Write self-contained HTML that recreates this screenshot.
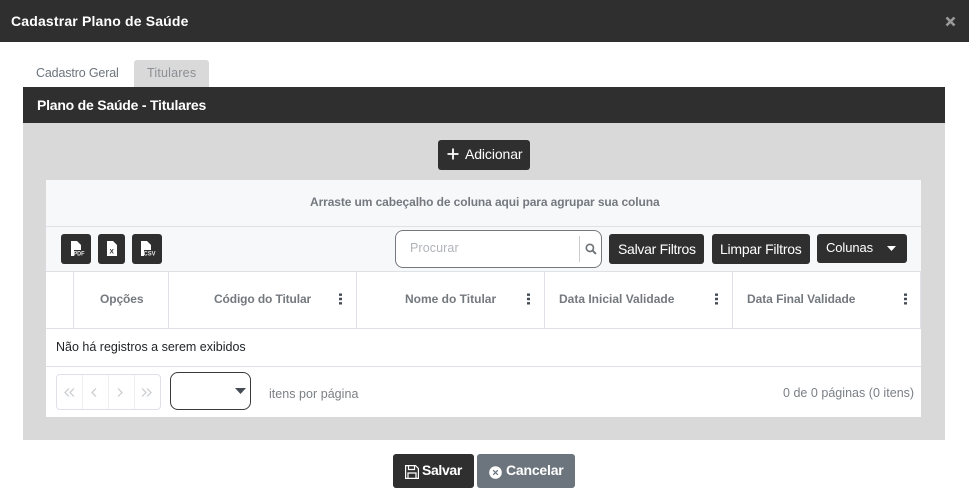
<!DOCTYPE html>
<html lang="pt"><head><meta charset="utf-8"><title>Cadastrar Plano de Saúde</title>
<style>
html,body{margin:0;padding:0;width:969px;height:498px;overflow:hidden;background:#fff;font-family:"Liberation Sans",sans-serif}
.a{position:absolute;box-sizing:border-box}
.t{position:absolute;white-space:nowrap;line-height:16px}
.btn{position:absolute;box-sizing:border-box;background:#2f2f2f;border-radius:3px}
.w{color:#fff}
.h{font-size:12px;font-weight:bold;color:#74797f;top:291px}
.ln{position:absolute;background:#dee2e6}
svg{position:absolute;display:block}
</style></head><body>
<div class="a" style="left:0;top:0;width:969px;height:42px;background:#2f2f2f"></div>
<span class="t w" style="left:11px;top:13px;font-size:14px;font-weight:bold;letter-spacing:.17px">Cadastrar Plano de Saúde</span>
<svg style="left:945px;top:16px" width="11" height="11" viewBox="0 0 11 11"><path d="M1.500 1.500L9.500 9.500M9.500 1.500L1.500 9.500" stroke="#9a9a9a" stroke-width="2.600"/></svg>

<span class="t" style="left:36px;top:65px;font-size:12.500px;color:#6c757d;letter-spacing:-.15px">Cadastro Geral</span>
<div class="a" style="left:134px;top:60px;width:75px;height:27px;background:#d9d9d9;border-radius:3px 3px 0 0"></div>
<span class="t" style="left:147px;top:65px;font-size:12.500px;color:#8b8f93;letter-spacing:.2px">Titulares</span>

<div class="a" style="left:23px;top:87px;width:922px;height:353px;background:#d9d9d9"></div>
<div class="a" style="left:23px;top:87px;width:922px;height:36px;background:#2f2f2f"></div>
<span class="t w" style="left:37px;top:97px;font-size:14px;font-weight:bold;letter-spacing:-.22px">Plano de Saúde - Titulares</span>

<div class="btn" style="left:438px;top:140px;width:92px;height:30px"></div>
<svg style="left:447px;top:148px" width="12" height="12" viewBox="0 0 12 12"><path d="M6 0.500V11.500M0.500 6H11.500" stroke="#fff" stroke-width="1.800"/></svg>
<span class="t w" style="left:465px;top:146px;font-size:14px;letter-spacing:-.1px">Adicionar</span>

<div class="a" style="left:46px;top:180px;width:875px;height:237px;background:#fff"></div>
<div class="a" style="left:46px;top:180px;width:875px;height:92px;background:#f7f8fa"></div>
<div class="ln" style="left:46px;top:226px;width:875px;height:1px"></div>
<div class="ln" style="left:46px;top:271px;width:875px;height:1px"></div>
<div class="ln" style="left:46px;top:328px;width:875px;height:1px"></div>
<div class="ln" style="left:46px;top:366px;width:875px;height:1px"></div>
<div class="ln" style="left:73px;top:272px;width:1px;height:56px"></div>
<div class="ln" style="left:168px;top:272px;width:1px;height:56px"></div>
<div class="ln" style="left:356px;top:272px;width:1px;height:56px"></div>
<div class="ln" style="left:544px;top:272px;width:1px;height:56px"></div>
<div class="ln" style="left:732px;top:272px;width:1px;height:56px"></div>
<div class="ln" style="left:920px;top:272px;width:1px;height:56px"></div>

<span class="t" style="left:310px;top:194px;font-size:12px;font-weight:bold;color:#74797f;letter-spacing:-.1px">Arraste um cabeçalho de coluna aqui para agrupar sua coluna</span>

<div class="btn" style="left:61px;top:234px;width:30px;height:30px"></div>
<svg style="left:70px;top:241px" width="16" height="16" viewBox="0 0 16 16"><path d="M1 0H7L11 4V9H4V15H1Z" fill="#fff"/><text x="3.500" y="14.500" font-size="6" font-weight="bold" fill="#e8e8e8" font-family="Liberation Sans" textLength="11" lengthAdjust="spacingAndGlyphs">PDF</text></svg>
<div class="btn" style="left:98px;top:234px;width:27px;height:30px"></div>
<svg style="left:106px;top:241px" width="12" height="16" viewBox="0 0 12 16"><path d="M1 0H7L11 4V15H1Z" fill="#fff"/><text x="3.500" y="12.500" font-size="6.500" font-weight="bold" fill="#333" font-family="Liberation Sans">X</text></svg>
<div class="btn" style="left:132px;top:234px;width:30px;height:30px"></div>
<svg style="left:140px;top:241px" width="17" height="16" viewBox="0 0 17 16"><path d="M1 0H7L11 4V9H4V15H1Z" fill="#fff"/><text x="3.500" y="14.500" font-size="6" font-weight="bold" fill="#e8e8e8" font-family="Liberation Sans" textLength="12" lengthAdjust="spacingAndGlyphs">CSV</text></svg>

<div class="a" style="left:395px;top:230px;width:207px;height:38px;background:#fff;border:1px solid #74797f;border-radius:8px"></div>
<span class="t" style="left:410px;top:240px;font-size:12.500px;color:#b1b4b8;letter-spacing:.1px">Procurar</span>
<div class="a" style="left:579px;top:236px;width:1px;height:26px;background:#ccc"></div>
<svg style="left:585px;top:243px" width="12" height="12" viewBox="0 0 13 13"><circle cx="5.300" cy="5.300" r="3.900" fill="none" stroke="#6e7378" stroke-width="1.800"/><path d="M8.200 8.200L11.800 11.800" stroke="#6e7378" stroke-width="2.100"/></svg>

<div class="btn" style="left:609px;top:234px;width:95px;height:30px"></div>
<span class="t w" style="left:618px;top:241px;font-size:14px;letter-spacing:-.28px">Salvar Filtros</span>
<div class="btn" style="left:712px;top:234px;width:98px;height:30px"></div>
<span class="t w" style="left:720px;top:241px;font-size:14px;letter-spacing:-.23px">Limpar Filtros</span>
<div class="btn" style="left:817px;top:234px;width:90px;height:29px"></div>
<span class="t w" style="left:826px;top:240px;font-size:13px;letter-spacing:-.1px">Colunas</span>
<svg style="left:887px;top:246px" width="9" height="5" viewBox="0 0 9 5"><path d="M0 0H9L4.500 5Z" fill="#fff"/></svg>

<span class="t h" style="left:100px;letter-spacing:-.1px">Opções</span>
<span class="t h" style="left:214px;letter-spacing:-.12px">Código do Titular</span>
<span class="t h" style="left:405px">Nome do Titular</span>
<span class="t h" style="left:559px">Data Inicial Validade</span>
<span class="t h" style="left:747px;letter-spacing:-.05px">Data Final Validade</span>
<svg style="left:339px;top:293px" width="3" height="12" viewBox="0 0 3 12"><path d="M0 0.500h3v2.400H0zM0 4.800h3v2.400H0zM0 9.100h3v2.400H0z" fill="#454c55"/></svg>
<svg style="left:527px;top:293px" width="3" height="12" viewBox="0 0 3 12"><path d="M0 0.500h3v2.400H0zM0 4.800h3v2.400H0zM0 9.100h3v2.400H0z" fill="#454c55"/></svg>
<svg style="left:715px;top:293px" width="3" height="12" viewBox="0 0 3 12"><path d="M0 0.500h3v2.400H0zM0 4.800h3v2.400H0zM0 9.100h3v2.400H0z" fill="#454c55"/></svg>
<svg style="left:904px;top:293px" width="3" height="12" viewBox="0 0 3 12"><path d="M0 0.500h3v2.400H0zM0 4.800h3v2.400H0zM0 9.100h3v2.400H0z" fill="#454c55"/></svg>

<span class="t" style="left:56px;top:339px;font-size:12.500px;color:#212529">Não há registros a serem exibidos</span>

<div class="a" style="left:56px;top:374px;width:105px;height:36px;border:1px solid #dee2e6;border-radius:4px;background:#fff"></div>
<div class="ln" style="left:82px;top:375px;width:1px;height:34px;background:#eceef0"></div>
<div class="ln" style="left:108px;top:375px;width:1px;height:34px;background:#eceef0"></div>
<div class="ln" style="left:134px;top:375px;width:1px;height:34px;background:#eceef0"></div>
<svg style="left:64px;top:388px" width="88" height="9" viewBox="0 0 88 9" fill="none" stroke="#c6c9cc" stroke-width="1.200"><path d="M5 .5L1 4.500L5 8.500M10 .5L6 4.500L10 8.500M32 .5L28 4.500L32 8.500M54 .5L58 4.500L54 8.500M78 .5L82 4.500L78 8.500M83 .5L87 4.500L83 8.500"/></svg>

<div class="a" style="left:170px;top:372px;width:81px;height:38px;background:#fff;border:1px solid #3a3a3a;border-radius:8px"></div>
<svg style="left:234px;top:388px" width="13" height="6" viewBox="0 0 13 6"><path d="M1 0H12L6.500 6Z" fill="#454c55"/></svg>
<span class="t" style="left:269px;top:386px;font-size:12.500px;color:#7b8086;letter-spacing:.03px">itens por página</span>
<span class="t" style="left:783px;top:385px;font-size:12.500px;color:#7b8086;letter-spacing:.02px">0 de 0 páginas (0 itens)</span>

<div class="btn" style="left:393px;top:454px;width:81px;height:34px"></div>
<svg style="left:405px;top:465px" width="14" height="14" viewBox="0 0 14 14" fill="none" stroke="#fff" stroke-width="1.200"><path d="M.6 .6H10.500L13.400 3.500V13.400H.6Z"/><path d="M3.500 .6V4.500H9.500V.6M3 13.400V8H11V13.400"/></svg>
<span class="t w" style="left:422px;top:462px;font-size:14px;font-weight:bold;letter-spacing:-.35px">Salvar</span>
<div class="a" style="left:477px;top:454px;width:98px;height:34px;background:#6c757d;border-radius:3px"></div>
<svg style="left:489px;top:466px" width="13" height="13" viewBox="0 0 13 13"><circle cx="6.500" cy="6.500" r="6.300" fill="#fff"/><path d="M4.200 4.200L8.800 8.800M8.800 4.200L4.200 8.800" stroke="#6c757d" stroke-width="1.300"/></svg>
<span class="t w" style="left:506px;top:462px;font-size:14px;font-weight:bold;letter-spacing:-.2px">Cancelar</span>
</body></html>
